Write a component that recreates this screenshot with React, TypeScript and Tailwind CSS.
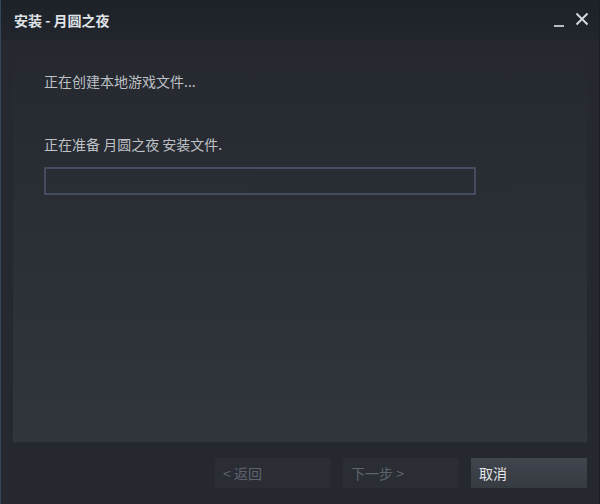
import React from 'react'

function App() {
    return (
        <div className="w-[600px] h-[504px] flex flex-col bg-[#25282e] border-l border-[#34465e] border-r border-r-[#1a1d22] text-[14px]" style={{ fontFamily: '"Noto Sans CJK SC", "Liberation Sans", sans-serif' }}>
            <div className="h-[40px] flex items-start justify-between bg-gradient-to-b from-[#1d2128] to-[#22252c] pl-[13px] pr-[10px] pt-[9px]">
                <span className="text-[#dfe2e6] font-bold text-[14px] leading-[22px]">安装 - 月圆之夜</span>
                <div className="flex items-start gap-[9px] text-[#c9ccd0]">
                    <svg width="13" height="16" viewBox="0 0 13 16" className="mt-[4px]">
                        <rect x="1" y="12" width="10" height="2" fill="#b8bcc2" />
                    </svg>
                    <svg width="14" height="14" viewBox="0 0 14 14" className="mt-[3px]">
                        <path d="M1.5 1.5 L12.5 12.5 M12.5 1.5 L1.5 12.5" stroke="#d4d7db" strokeWidth="2" />
                    </svg>
                </div>
            </div>
            <div className="flex-1 mx-[12px] bg-gradient-to-b from-[#25282f] to-[#31353c] pl-[31px] pt-[29px]">
                <p className="text-[#bdc0c4] leading-[24px]">正在创建本地游戏文件...</p>
                <p className="text-[#bdc0c4] leading-[24px] mt-[39px]">正在准备 月圆之夜 安装文件.</p>
                <div className="mt-[11px] w-[432px] h-[28px] border-2 border-[#444d60]"></div>
            </div>
            <div className="h-[62px] flex justify-end items-start gap-[12px] pt-[16px] pr-[12px]">
                <div className="w-[116px] h-[30px] bg-[#2a2d34] text-[#5f646c] flex items-center pl-[8px]">&lt; 返回</div>
                <div className="w-[116px] h-[30px] bg-[#2a2d34] text-[#5f646c] flex items-center pl-[8px]">下一步 &gt;</div>
                <div className="w-[116px] h-[30px] bg-gradient-to-b from-[#40454e] to-[#363a41] text-[#e4e6e8] flex items-center pl-[8px]">取消</div>
            </div>
        </div>
    )
}

export default App
